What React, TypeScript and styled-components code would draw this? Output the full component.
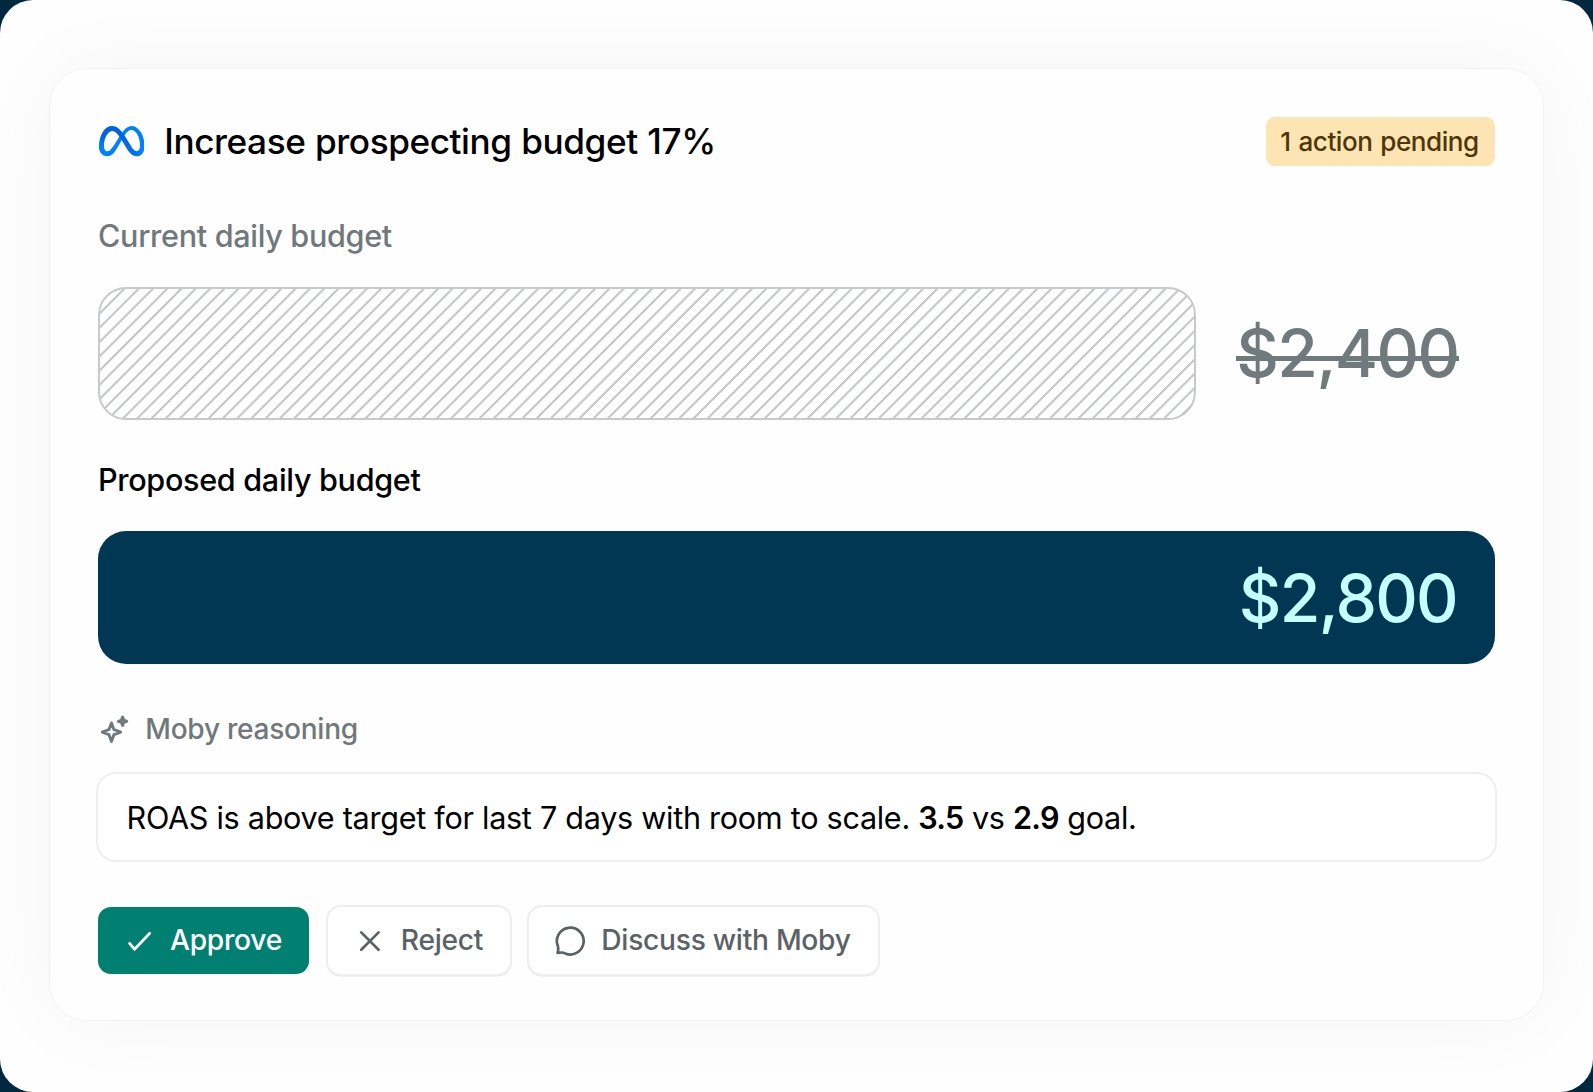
import React from 'react';
import styled, { createGlobalStyle, css } from 'styled-components';

const GlobalStyle = createGlobalStyle`
  *, *::before, *::after {
    box-sizing: border-box;
    letter-spacing: -0.01em;
  }
  body {
    margin: 0;
    background: #02283f;
    font-family: Inter, "Liberation Sans", sans-serif;
    color: #000;
  }
`;

const Panel = styled.main`
  height: 1092px;
  padding: 68px 49px 71px 49px;
  border-radius: 33px;
  background: #fefefe;
  overflow: hidden;
`;

const Card = styled.article`
  height: 953px;
  padding: 48px 48px 0;
  border: 1px solid #f2f2f2;
  border-radius: 38px;
  background: #fefefe;
  box-shadow: 0 0 84px rgba(0, 0, 0, 0.043);
`;

const Header = styled.header`
  display: flex;
  align-items: center;
  height: 49px;
`;

const MetaMark = styled.svg`
  width: 45.4px;
  height: 30.2px;
  margin: 0 20px 0 0.9px;
`;

const Title = styled.h1`
  margin: 0;
  padding-bottom: 2px;
  font-size: 35.2px;
  line-height: 46px;
  font-weight: 500;
  letter-spacing: -0.0125em;
  word-spacing: 0.7px;
`;

const Badge = styled.span`
  display: flex;
  align-items: center;
  justify-content: center;
  width: 229px;
  height: 49px;
  margin-left: auto;
  padding-right: 2px;
  border-radius: 9px;
  background: #fde5b3;
  color: #4f3608;
  font-size: 26.1px;
  font-weight: 500;
  letter-spacing: -0.018em;
  word-spacing: 1.4px;
`;

const Label = styled.h2<{ $muted?: boolean }>`
  margin: 0;
  font-size: 30.55px;
  line-height: 40px;
  font-weight: 500;
  color: ${p => (p.$muted ? '#70787b' : '#000')};
`;

const BudgetBlock = styled.section<{ $top: number; $gap: number }>`
  display: flex;
  flex-direction: column;
  gap: ${p => p.$gap}px;
  margin-top: ${p => p.$top}px;
`;

const BudgetRow = styled.div`
  display: flex;
  align-items: center;
  height: 133px;
`;

const barShape = css`
  height: 100%;
  border-radius: 28px;
`;

const HatchedBar = styled.div`
  ${barShape}
  width: 1098px;
  border: 2px solid #c7c9ca;
  background: repeating-linear-gradient(
    135deg,
    transparent 0 5.5px,
    #c7c9ca 6.2px 7.7px,
    transparent 8.4px 10.085px
  );
`;

const SolidBar = styled.div`
  ${barShape}
  display: flex;
  flex: 1;
  align-items: center;
  justify-content: flex-end;
  padding-right: 38px;
  background: #023754;
  color: #c6ffff;
`;

const Amount = styled.span`
  font-size: 66px;
  line-height: 80px;
  font-weight: 500;
  letter-spacing: -0.026em;
`;

const StruckAmount = styled(Amount)`
  position: relative;
  margin: 0 0 2px 40.3px;
  color: #70797c;
  letter-spacing: -0.024em;

  &::after {
    content: '';
    position: absolute;
    top: 43px;
    left: 0;
    right: 0;
    height: 5px;
    background: currentColor;
  }
`;

const ReasoningHeading = styled.div`
  display: flex;
  align-items: center;
  height: 40px;
  margin-top: 44.5px;
  color: #70787b;
  font-size: 28.1px;
  font-weight: 500;
`;

const SparkleIcon = styled.svg`
  width: 32px;
  height: 32px;
  margin-right: 15.3px;
`;

const outlined = css`
  background: #fff;
  box-shadow: 0 0 0 2px #eeeeee, 0 0.6px 0.6px 2px #e6e6e6;
`;

const Reasoning = styled.p`
  display: flex;
  align-items: center;
  height: 86px;
  margin: 25.5px 0 0;
  padding-left: 28.5px;
  border-radius: 18px;
  background: #fff;
  box-shadow: 0 0 0 2px #efefef;
  font-size: 30.6px;
  word-spacing: 0.1px;
  white-space: pre;

  b {
    font-weight: 600;
    letter-spacing: -0.025em;
  }
`;

const Actions = styled.footer`
  display: flex;
  gap: 19px;
  margin-top: 47px;
`;

const Button = styled.button<{ $primary?: boolean; $width: number }>`
  display: flex;
  align-items: center;
  width: ${p => p.$width}px;
  height: 67px;
  padding: 0 0 2px 26px;
  border: 0;
  border-radius: 13px;
  color: ${p => (p.$primary ? '#fff' : '#5b6164')};
  font: 500 28.2px Inter, "Liberation Sans", sans-serif;
  ${p => (p.$primary ? css`background: #018071;` : outlined)}
`;

const ButtonIcon = styled.svg<{ $gap: number }>`
  width: 32px;
  height: 32px;
  margin: 2px ${p => p.$gap}px 0 0;
  fill: none;
  stroke: currentColor;
  stroke-width: 2.7;
  stroke-linecap: round;
  stroke-linejoin: round;
`;

function MetaLogo() {
  return (
    <MetaMark viewBox="0 0 287.56 191" aria-label="Meta">
      <defs>
        <linearGradient id="ribbon" x1="62.34" y1="101.45" x2="260.34" y2="91.45" gradientUnits="userSpaceOnUse">
          <stop offset="0" stopColor="#0064e1" />
          <stop offset="0.4" stopColor="#0064e1" />
          <stop offset="0.83" stopColor="#0073ee" />
          <stop offset="1" stopColor="#0082fb" />
        </linearGradient>
        <linearGradient id="leftLoop" x1="41.42" y1="138" x2="41.42" y2="65" gradientUnits="userSpaceOnUse">
          <stop offset="0" stopColor="#0082fb" />
          <stop offset="1" stopColor="#0064e0" />
        </linearGradient>
      </defs>
      <path fill="#0081fb" d="M31.06,126c0,11,2.41,19.41,5.56,24.51A19,19,0,0,0,53.19,160c8.1,0,15.51-2,29.79-21.76,11.44-15.83,24.92-38,34-52l15.36-23.6c10.67-16.39,23-34.61,37.18-47C181.07,5.6,193.54,0,206.09,0c21.07,0,41.14,12.21,56.5,35.11,16.81,25.08,25,56.67,25,89.27,0,19.38-3.82,33.62-10.32,44.87C271,180.13,258.72,191,238.13,191V160c17.63,0,22-16.2,22-34.74,0-26.42-6.16-55.74-19.73-76.69-9.63-14.86-22.11-23.94-35.84-23.94-14.85,0-26.8,11.2-40.23,31.17-7.14,10.61-14.47,23.54-22.7,38.13l-9.06,16c-18.2,32.27-22.81,39.62-31.91,51.75C84.74,183,71.12,191,53.19,191c-21.27,0-34.72-9.21-43-23.09C3.34,156.6,0,141.76,0,124.85Z" />
      <path fill="url(#ribbon)" d="M24.49,37.3C38.73,15.35,59.28,0,82.85,0c13.65,0,27.22,4,41.39,15.61,15.5,12.65,32,33.48,52.63,67.81l7.39,12.32c17.84,29.72,28,45,33.93,52.22,7.64,9.26,13,12,19.94,12,17.63,0,22-16.2,22-34.74l27.4-.86c0,19.38-3.82,33.62-10.32,44.87C271,180.13,258.72,191,238.13,191c-12.8,0-24.14-2.78-36.68-14.61-9.64-9.08-20.91-25.21-29.58-39.71L146.08,93.6c-12.94-21.62-24.81-37.74-31.68-45C107,40.71,97.51,31.23,82.35,31.23c-12.27,0-22.69,8.61-31.41,21.78Z" />
      <path fill="url(#leftLoop)" d="M82.35,31.23c-12.27,0-22.69,8.61-31.41,21.78C38.61,71.62,31.06,99.34,31.06,126c0,11,2.41,19.41,5.56,24.51L10.14,167.91C3.34,156.6,0,141.76,0,124.85,0,94.1,8.44,62.05,24.49,37.3,38.73,15.35,59.28,0,82.85,0Z" />
    </MetaMark>
  );
}

function Sparkles() {
  return (
    <SparkleIcon viewBox="0 0 32 32" fill="none" stroke="currentColor" strokeWidth="2.9" strokeLinejoin="round">
      <path d="M13.5 9.9 L15.9 16.5 L22.7 19.1 L15.9 21.7 L13.5 28.4 L11 21.7 L4.3 19.1 L11 16.5 Z" />
      <path d="M24.6 4.1 L25.8 7.1 L28.8 8.3 L25.8 9.5 L24.6 12.5 L23.4 9.5 L20.4 8.3 L23.4 7.1 Z" />
    </SparkleIcon>
  );
}

export default function App() {
  return (
    <>
      <GlobalStyle />
      <Panel>
        <Card>
          <Header>
            <MetaLogo />
            <Title>Increase prospecting budget 17%</Title>
            <Badge>1 action pending</Badge>
          </Header>

          <BudgetBlock $top={49.5} $gap={31.5}>
            <Label $muted>Current daily budget</Label>
            <BudgetRow>
              <HatchedBar />
              <StruckAmount>$2,400</StruckAmount>
            </BudgetRow>
          </BudgetBlock>

          <BudgetBlock $top={39.5} $gap={31.5}>
            <Label>Proposed daily budget</Label>
            <BudgetRow>
              <SolidBar>
                <Amount>$2,800</Amount>
              </SolidBar>
            </BudgetRow>
          </BudgetBlock>

          <ReasoningHeading>
            <Sparkles />
            Moby reasoning
          </ReasoningHeading>
          <Reasoning>
            <span>
              ROAS is above target for last 7 days with room to scale. <b>3.5</b> vs <b>2.9</b> goal.
            </span>
          </Reasoning>

          <Actions>
            <Button $primary $width={211.3}>
              <ButtonIcon viewBox="0 0 32 32" $gap={14}>
                <path d="M5.6 18.3 L10.6 24.3 L25.7 8.3" />
              </ButtonIcon>
              Approve
            </Button>
            <Button $width={181.5}>
              <ButtonIcon viewBox="0 0 32 32" $gap={14.5}>
                <path d="M7.2 7.4 L24.6 24.8 M24.6 7.4 L7.2 24.8" />
              </ButtonIcon>
              Reject
            </Button>
            <Button $width={349.7}>
              <ButtonIcon viewBox="0 0 32 32" $gap={14.5}>
                <path d="M2.7 27.9 C3.1 26.2 3.5 24 3 21.5 A13.4 13.4 0 1 1 10.2 28.5 C8.2 27.1 6.1 27.2 2.7 27.9 Z" />
              </ButtonIcon>
              Discuss with Moby
            </Button>
          </Actions>
        </Card>
      </Panel>
    </>
  );
}
